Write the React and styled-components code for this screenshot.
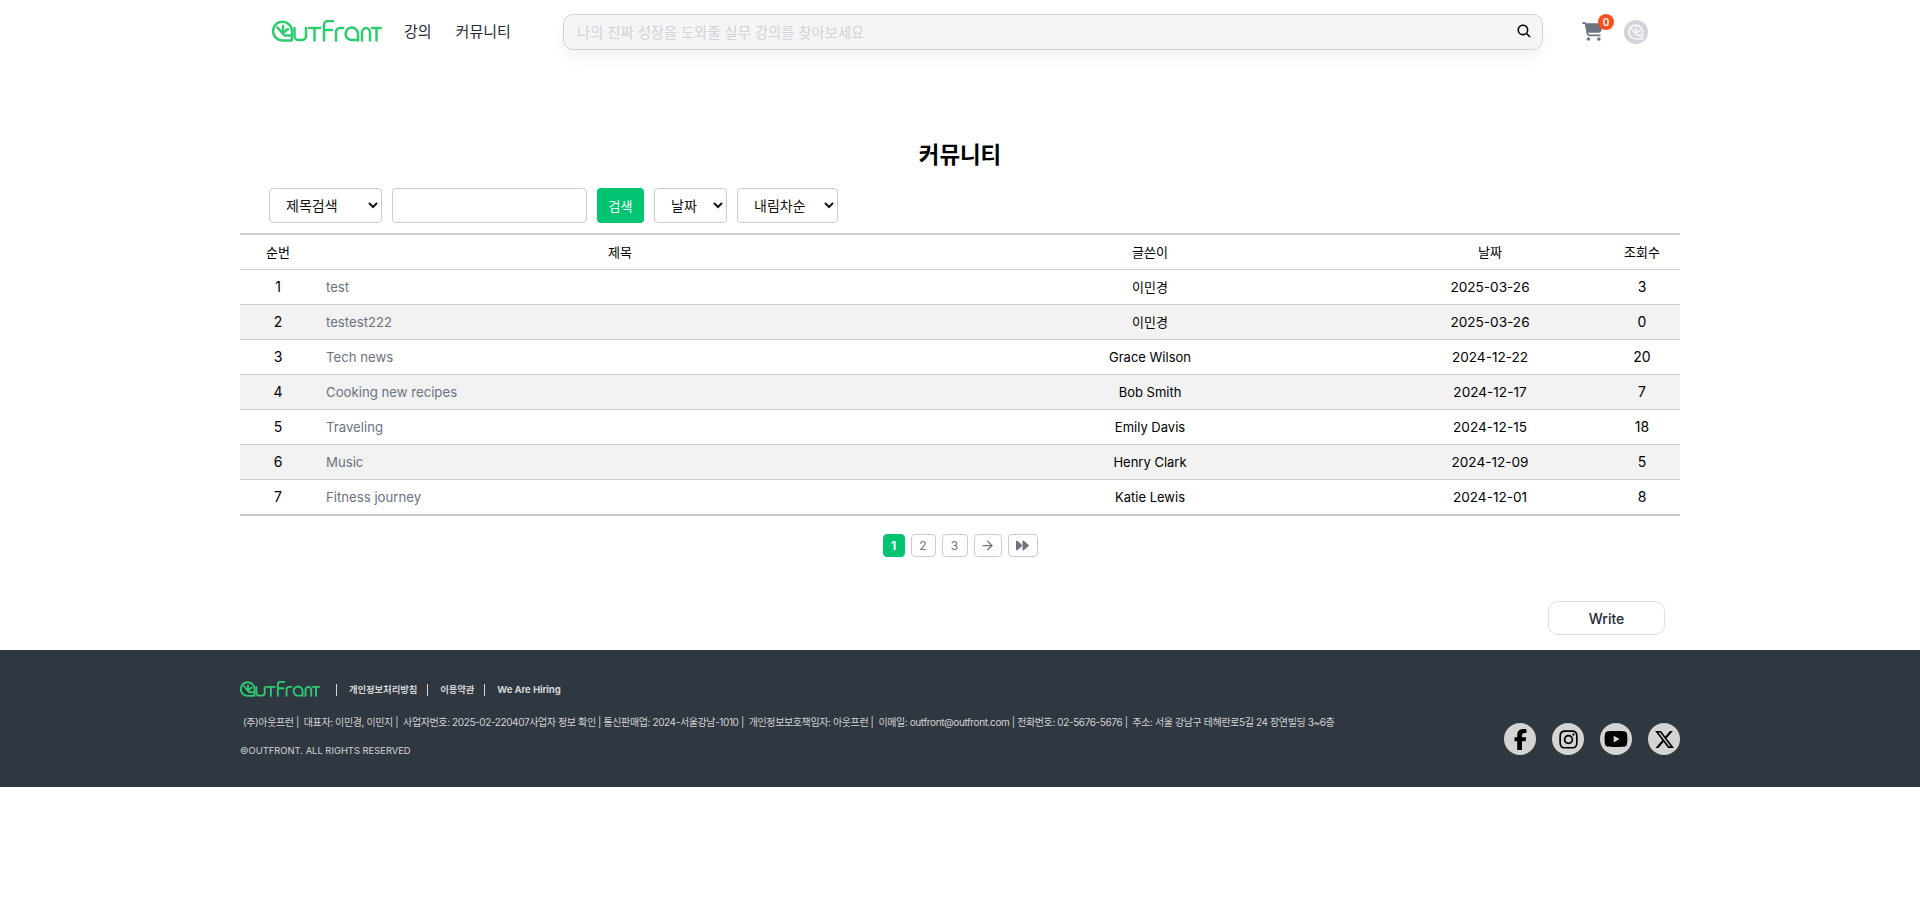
import React from "react";
import styled, { createGlobalStyle } from "styled-components";
import { FaFacebookF, FaInstagram, FaYoutube, FaXTwitter, FaCartShopping, FaForward } from "react-icons/fa6";
import { IoSearch } from "react-icons/io5";
import { ArrowRight } from "lucide-react";

const Global = createGlobalStyle`
  html, body { margin: 0; padding: 0; background: #fff; }
  body { font-family: Inter, "Noto Sans CJK KR", sans-serif; color: #000; }
  * { box-sizing: border-box; }
`;

const Page = styled.div`
  width: 1920px;
  height: 919px;
  overflow: hidden;
  display: flex;
  flex-direction: column;
`;

const Header = styled.header`
  height: 64px;
  padding: 14px 0 0 272px;
  display: flex;
  align-items: flex-start;
`;
const LogoWrap = styled.div`
  width: 110px;
  height: 34px;
  display: flex;
  align-items: center;
`;
const Nav = styled.nav`
  display: flex;
  gap: 24px;
  margin-left: 22px;
  width: 137px;
  height: 33px;
  align-items: center;
`;
const NavLink = styled.a`
  font-size: 15px;
  color: #1f2937;
  white-space: nowrap;
`;
const SearchBox = styled.div`
  width: 980px;
  height: 36px;
  margin-left: 22px;
  border: 1px solid #d1d5db;
  border-radius: 10px;
  background: #f5f5f6;
  box-shadow: 0 8px 14px rgba(0, 0, 0, 0.05);
  display: flex;
  align-items: center;
  justify-content: space-between;
  padding: 0 10px 2px 13px;
`;
const Placeholder = styled.span`
  font-size: 14.3px;
  color: #d0d3d8;
`;
const CartWrap = styled.div`
  position: relative;
  margin-left: 39px;
  margin-top: 7px;
  width: 22px;
  height: 21px;
  color: #6b7280;
  font-size: 21px;
  line-height: 0;
`;
const Badge = styled.span`
  position: absolute;
  top: -7px;
  right: -10px;
  width: 16px;
  height: 16px;
  border-radius: 50%;
  background: #f4511e;
  color: #fff;
  font-size: 10px;
  line-height: 16px;
  font-weight: 600;
  text-align: center;
`;
const Avatar = styled.div`
  width: 24px;
  height: 24px;
  margin: 6px 0 0 20px;
  border-radius: 50%;
  background: #d1d5db;
  display: flex;
  align-items: center;
  justify-content: center;
`;

const Main = styled.main`
  width: 1440px;
  margin: 0 auto;
  height: 586px;
  display: flex;
  flex-direction: column;
`;
const Title = styled.h1`
  margin: 74px 0 0;
  height: 34px;
  font-size: 22.4px;
  line-height: 34px;
  font-weight: 700;
  text-align: center;
`;
const Filters = styled.div`
  display: flex;
  gap: 10px;
  margin: 16px 0 0 29px;
  height: 35px;
`;
const Select = styled.select`
  width: ${(p) => p.$w}px;
  height: 35px;
  padding: 0 0 0 12px;
  background: #fff;
  border: 1px solid #ccc;
  border-radius: 4px;
  font: 14px Inter, "Noto Sans CJK KR", sans-serif;
  color: #111;
`;
const TextInput = styled.input`
  width: 195px;
  height: 35px;
  border: 1px solid #ccc;
  border-radius: 4px;
  background: #fff;
`;
const SearchButton = styled.button`
  width: 47px;
  height: 35px;
  border: 0;
  padding: 0;
  border-radius: 4px;
  background: #00c471;
  color: #fff;
  font: 13px Inter, "Noto Sans CJK KR", sans-serif;
`;
const Table = styled.table`
  width: 1440px;
  margin-top: 10px;
  border-collapse: collapse;
  table-layout: fixed;
  border-top: 2px solid #ccc;
  border-bottom: 2px solid #ccc;
`;
const Row = styled.tr`
  height: 35px;
  background: ${(p) => (p.$alt ? "#f2f2f2" : "#fff")};
  border-bottom: 1px solid #ccc;
  tbody &:last-child { height: 36px; }
`;
const Th = styled.th`
  font-size: 13px;
  font-weight: 400;
  padding: 0;
  text-align: center;
`;
const Td = styled.td`
  font-size: ${(p) => p.$size || 13.6}px;
  padding: 0;
  text-align: center;
`;
const TitleCell = styled.td`
  font-size: 13.2px;
  padding: 0 0 0 10px;
  text-align: left;
  color: #6b7280;
`;
const Pagination = styled.div`
  display: flex;
  justify-content: center;
  gap: 6px;
  margin: 18px 0 0;
  height: 23px;
`;
const PageButton = styled.button`
  width: ${(p) => p.$w}px;
  height: 23px;
  padding: 0;
  border: 1px solid ${(p) => (p.$active ? "#00c471" : "#ccc")};
  border-radius: 4px;
  background: ${(p) => (p.$active ? "#00c471" : "#fff")};
  color: ${(p) => (p.$active ? "#fff" : "#6b7280")};
  font: ${(p) => (p.$active ? 700 : 400)} 12px Inter, sans-serif;
  display: flex;
  align-items: center;
  justify-content: center;
`;
const WriteRow = styled.div`
  display: flex;
  justify-content: flex-end;
  margin-top: 44px;
  padding-right: 15px;
`;
const WriteButton = styled.button`
  width: 117px;
  height: 34px;
  border: 1px solid #e0e0e0;
  border-radius: 10px;
  background: #fff;
  color: #1f2937;
  font: 500 14px Inter, sans-serif;
`;

const Footer = styled.footer`
  height: 137px;
  background: #2f3741;
  padding: 33px 240px 0;
  display: flex;
  justify-content: space-between;
`;
const FooterLeft = styled.div`
  display: flex;
  flex-direction: column;
`;
const FooterLinks = styled.div`
  display: flex;
  align-items: center;
  height: 14px;
`;
const LogoGap = styled.span`
  width: 16px;
`;
const FooterLink = styled.a`
  font-size: ${(p) => (p.$latin ? 9.6 : 9.4)}px;
  font-weight: 700;
  letter-spacing: -0.1px;
  color: #d4d4d4;
  padding: 0 10px 0 12px;
  height: 12px;
  line-height: 12px;
  border-left: 1px solid #d4d4d4;
  white-space: nowrap;
`;
const Address = styled.p`
  margin: 18px 0 0 3px;
  font-size: 10px;
  line-height: 14px;
  letter-spacing: -0.39px;
  color: #d4d4d4;
  white-space: nowrap;
`;
const Copyright = styled.p`
  margin: 15px 0 0;
  font-size: 9.4px;
  line-height: 14px;
  color: #d4d4d4;
  white-space: nowrap;
`;
const Socials = styled.div`
  display: flex;
  gap: 16px;
  margin-top: 40px;
`;
const SocialIcon = styled.a`
  width: 32px;
  height: 32px;
  border-radius: 50%;
  background: #d4d4d4;
  color: #000;
  font-size: ${(p) => p.$size || 21}px;
  display: flex;
  align-items: center;
  justify-content: center;
`;

const LogoMark = ({ color, sw = 2.5 }) => (
  <g fill="none" stroke={color} strokeWidth={sw} strokeLinecap="round" strokeLinejoin="round">
    <path d="M19.5 20.5 H10.5 A9.4 9.4 0 1 1 19.9 11 V20" />
    <path d="M5.5 7.5 L12.5 15.5 H18 M11 14 V6 M11 13 L16 9" />
  </g>
);

const Logo = ({ color = "#2ecc71", width = 110, height = 22 }) => (
  <svg width={width} height={height} viewBox="0 0 110 22" aria-label="Outfront">
    <LogoMark color={color} />
    <g fill="none" stroke={color} strokeWidth="2.5" strokeLinecap="round" strokeLinejoin="round">
      <path d="M22.5 8 V16 A4 4 0 0 0 26.5 20 H30 A4 4 0 0 0 34 16 V8" />
      <path d="M37 8 H48 M42.5 8 V20.5" />
      <path d="M52 20.5 V5 A4 4 0 0 1 56 1 H61 M52 10 H60" />
      <path d="M64 20.5 V12 A4 4 0 0 1 68 8 H71" />
      <path d="M86 20.5 V14 A6.2 6.2 0 1 0 80 20 H85" />
      <path d="M90 20.5 V13 A4 5 0 0 1 98 13 V20.5" />
      <path d="M100 8 H109 M104.5 8 V20.5" />
    </g>
  </svg>
);

const FooterLogoBox = styled.div`
  height: 16px;
  margin-top: -2px;
  line-height: 0;
`;

const rows = [
  [1, "test", "이민경", "2025-03-26", 3],
  [2, "testest222", "이민경", "2025-03-26", 0],
  [3, "Tech news", "Grace Wilson", "2024-12-22", 20],
  [4, "Cooking new recipes", "Bob Smith", "2024-12-17", 7],
  [5, "Traveling", "Emily Davis", "2024-12-15", 18],
  [6, "Music", "Henry Clark", "2024-12-09", 5],
  [7, "Fitness journey", "Katie Lewis", "2024-12-01", 8],
];

export default function App() {
  return (
    <Page>
      <Global />
      <Header>
        <LogoWrap><Logo /></LogoWrap>
        <Nav>
          <NavLink>강의</NavLink>
          <NavLink>커뮤니티</NavLink>
        </Nav>
        <SearchBox>
          <Placeholder>나의 진짜 성장을 도와줄 실무 강의를 찾아보세요</Placeholder>
          <IoSearch size={16} color="#000" />
        </SearchBox>
        <CartWrap>
          <FaCartShopping />
          <Badge>0</Badge>
        </CartWrap>
        <Avatar>
          <svg width="16" height="16" viewBox="0 0 22 22"><LogoMark color="#f3f4f6" sw={2.6} /></svg>
        </Avatar>
      </Header>
      <Main>
        <Title>커뮤니티</Title>
        <Filters>
          <Select $w={113}><option>제목검색</option></Select>
          <TextInput />
          <SearchButton>검색</SearchButton>
          <Select $w={73}><option>날짜</option></Select>
          <Select $w={101}><option>내림차순</option></Select>
        </Filters>
        <Table>
          <colgroup>
            <col width="76" /><col width="608" /><col width="452" /><col width="228" /><col width="76" />
          </colgroup>
          <thead>
            <Row>
              <Th>순번</Th><Th>제목</Th><Th>글쓴이</Th><Th>날짜</Th><Th>조회수</Th>
            </Row>
          </thead>
          <tbody>
            {rows.map((r, i) => (
              <Row key={r[0]} $alt={i % 2 === 1}>
                <Td $size={14}>{r[0]}</Td>
                <TitleCell>{r[1]}</TitleCell>
                <Td $size={13}>{r[2]}</Td>
                <Td>{r[3]}</Td>
                <Td $size={14}>{r[4]}</Td>
              </Row>
            ))}
          </tbody>
        </Table>
        <Pagination>
          <PageButton $w={22} $active>1</PageButton>
          <PageButton $w={25}>2</PageButton>
          <PageButton $w={26}>3</PageButton>
          <PageButton $w={28}><ArrowRight size={15} /></PageButton>
          <PageButton $w={30}><FaForward size={13} /></PageButton>
        </Pagination>
        <WriteRow><WriteButton>Write</WriteButton></WriteRow>
      </Main>
      <Footer>
        <FooterLeft>
          <FooterLinks>
            <FooterLogoBox><Logo width={80} height={16} color="#2ecc71" /></FooterLogoBox>
            <LogoGap />
            <FooterLink>개인정보처리방침</FooterLink>
            <FooterLink>이용약관</FooterLink>
            <FooterLink $latin>We Are Hiring</FooterLink>
          </FooterLinks>
          <Address>(주)아웃프런 | &nbsp;대표자: 이민경, 이민지 | &nbsp;사업자번호: 2025-02-220407사업자 정보 확인 | 통신판매업: 2024-서울강남-1010 | &nbsp;개인정보보호책임자: 아웃프런 | &nbsp;이메일: outfront@outfront.com | 전화번호: 02-5676-5676 | &nbsp;주소: 서울 강남구 테헤란로5길 24 장연빌딩 3~6층</Address>
          <Copyright>©OUTFRONT. ALL RIGHTS RESERVED</Copyright>
        </FooterLeft>
        <Socials>
          <SocialIcon><FaFacebookF /></SocialIcon>
          <SocialIcon><FaInstagram /></SocialIcon>
          <SocialIcon $size={24}><FaYoutube /></SocialIcon>
          <SocialIcon><FaXTwitter /></SocialIcon>
        </Socials>
      </Footer>
    </Page>
  );
}
